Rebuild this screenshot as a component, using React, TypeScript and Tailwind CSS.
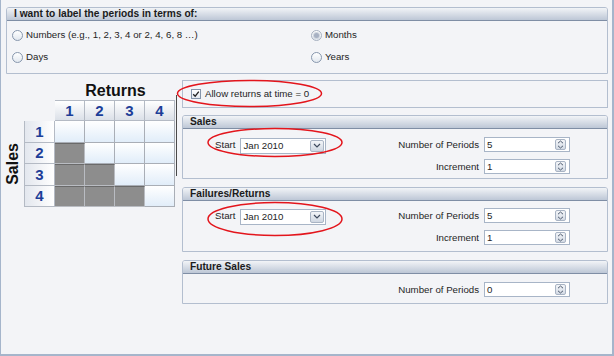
import React from "react";

const sans = "font-['Liberation_Sans',Arial,sans-serif]";

interface RadioProps {
  label: string;
  checked?: boolean;
}

const Radio = ({ label, checked }: RadioProps) => {
  return (
    <div className="flex items-center h-[22px]">
      <span
        className={`flex items-center justify-center w-[11px] h-[11px] rounded-full border bg-linear-to-b from-white to-[#e2e8ef] ${
          checked ? "border-[#a6b0c0]" : "border-[#8797ad]"
        }`}
      >
        {checked && (
          <span className="w-[5px] h-[5px] rounded-full bg-[#a7b1c3] ring-1 ring-[#cfd5de]" />
        )}
      </span>
      <span className="ml-[3px]">{label}</span>
    </div>
  );
};

const PanelHeader = ({ title }: { title: string }) => {
  return (
    <div className="h-[13px] flex items-center pl-[7px] bg-linear-to-b from-[#f2f4f7] to-[#bdc7d6] border-b border-[#7f8ea5] rounded-t-[2px] font-bold text-[10.2px] leading-none text-[#1b1b1b]">
      {title}
    </div>
  );
};

const SpinButton = () => (
  <span className="flex items-center justify-center w-[11px] h-[11px] rounded-[2px] border border-[#a9b4c4] bg-linear-to-b from-[#f3f5f8] to-[#d3dae4]">
    <svg width="7" height="9" viewBox="0 0 7 9">
      <path d="M1 3.2 L3.5 1 L6 3.2" fill="none" stroke="#4d5a6e" strokeWidth="1" />
      <path d="M1 5.8 L3.5 8 L6 5.8" fill="none" stroke="#4d5a6e" strokeWidth="1" />
    </svg>
  </span>
);

const SpinInput = ({ value }: { value: string }) => {
  return (
    <div className="flex items-center w-[86px] h-[15px] bg-white border border-[#a8b5c7] pl-[2px] pr-[3px]">
      <span className="flex-1 leading-none">{value}</span>
      <SpinButton />
    </div>
  );
};

const Combo = ({ value }: { value: string }) => {
  return (
    <div className="flex items-center w-[86px] h-[16px] bg-white border border-[#a8b5c7] pl-[2px] pr-[1px]">
      <span className="flex-1 leading-none">{value}</span>
      <span className="flex items-center justify-center w-[14px] h-[12px] rounded-[2px] border border-[#a9b4c4] bg-linear-to-b from-[#f3f5f8] to-[#cfd7e2]">
        <svg width="8" height="5" viewBox="0 0 8 5">
          <path d="M1 1 L4 4 L7 1" fill="none" stroke="#3f4b5e" strokeWidth="1.2" />
        </svg>
      </span>
    </div>
  );
};

interface RangePanelProps {
  title: string;
  showStart?: boolean;
  rows: { label: string; value: string }[];
  padTop: string;
  padBottom: string;
}

const RangePanel = ({ title, showStart, rows, padTop, padBottom }: RangePanelProps) => {
  return (
    <div className="border border-[#b3becf] rounded-t-[3px]">
      <PanelHeader title={title} />
      <div className={`flex items-start ${padTop} ${padBottom}`}>
        {showStart && (
          <div className="flex items-center h-[15px] mt-[1px] pl-[32px]">
            <span>Start</span>
            <span className="ml-[5px]">
              <Combo value="Jan 2010" />
            </span>
          </div>
        )}
        <div className="ml-auto pr-[37px] grid grid-cols-[auto_86px] gap-x-[5px] gap-y-[7px] items-center">
          {rows.map((row) => (
            <React.Fragment key={row.label}>
              <span className="text-right leading-none">{row.label}</span>
              <SpinInput value={row.value} />
            </React.Fragment>
          ))}
        </div>
      </div>
    </div>
  );
};

const HeaderCell = ({ n, side }: { n: number; side?: boolean }) => (
  <div
    className={`flex items-center justify-center border-r border-b border-[#b4bac4] text-[15px] font-bold text-[#1d3e98] leading-none ${
      side
        ? "border-l bg-linear-to-r from-[#e3e7ee] to-white"
        : "border-t bg-linear-to-b from-white to-[#dbe0e8]"
    }`}
  >
    {n}
  </div>
);

const ReturnsGrid = () => {
  const idx = [1, 2, 3, 4];
  return (
    <div className="grid grid-cols-[31px_repeat(4,30px)] grid-rows-[21px_repeat(4,21.5px)]">
      <div />
      {idx.map((c) => (
        <HeaderCell key={`h${c}`} n={c} />
      ))}
      {idx.map((r) => (
        <React.Fragment key={`r${r}`}>
          <HeaderCell n={r} side />
          {idx.map((c) =>
            c < r ? (
              <div
                key={`c${r}${c}`}
                className="bg-[#8d8d8d] border-t border-t-[#6a6a6a] border-r border-b border-[#b9bcc2]"
              />
            ) : (
              <div
                key={`c${r}${c}`}
                className="bg-linear-to-b from-white to-[#e1edf9] border-r border-b border-[#a9aeb6]"
              />
            )
          )}
        </React.Fragment>
      ))}
    </div>
  );
};

const App = () => {
  return (
    <div
      className={`relative w-[614px] h-[356px] overflow-hidden bg-[#f3f4f7] border-l border-r-2 border-b-2 border-[#a5b5cb] text-[9.7px] text-[#1e1e1e] ${sans}`}
    >
      {/* Period labels */}
      <div className="pt-[7px] pl-[5px] pr-[4px]">
        <div className="border border-[#b3becf] rounded-t-[3px]">
          <PanelHeader title="I want to label the periods in terms of:" />
          <div className="grid grid-cols-[299px_1fr] pl-[5px] pt-[3px] pb-[5px]">
            <Radio label="Numbers (e.g., 1, 2, 3, 4 or 2, 4, 6, 8 …)" />
            <Radio label="Months" checked />
            <Radio label="Days" />
            <Radio label="Years" />
          </div>
        </div>
      </div>

      <div className="flex mt-[6px]">
        {/* Returns / Sales matrix */}
        <div className="w-[175px] pt-[3px]">
          <div className="ml-[54px] w-[121px] text-center font-bold text-[16px] leading-[16px] text-[#111]">
            Returns
          </div>
          <div className="flex mt-[1px]">
            <div className="w-[23px] mt-[21px] h-[86px] flex items-center justify-center">
              <span className="[writing-mode:vertical-rl] rotate-180 font-bold text-[16px] leading-none text-[#111]">
                Sales
              </span>
            </div>
            <ReturnsGrid />
          </div>
        </div>
        <div className="self-start w-px h-[81px] mt-[15px] bg-[#4a4a4a]" />

        {/* Settings */}
        <div className="ml-[5px] w-[426px] flex flex-col">
          <div className="h-[28px] flex items-center pl-[8px] border border-[#b3becf]">
            <span className="flex items-center justify-center w-[10px] h-[10px] border border-[#8595ab] bg-linear-to-b from-white to-[#e3e8ef]">
              <svg width="8" height="8" viewBox="0 0 8 8">
                <path d="M1.2 4.2 L3.2 6.2 L6.8 1.6" fill="none" stroke="#222" strokeWidth="1.3" />
              </svg>
            </span>
            <span className="ml-[4px]">Allow returns at time = 0</span>
          </div>

          <div className="mt-[7px]">
            <RangePanel
              title="Sales"
              showStart
              padTop="pt-[8px]"
              padBottom="pb-[4px]"
              rows={[
                { label: "Number of Periods", value: "5" },
                { label: "Increment", value: "1" },
              ]}
            />
          </div>

          <div className="mt-[8px]">
            <RangePanel
              title="Failures/Returns"
              showStart
              padTop="pt-[7px]"
              padBottom="pb-[6px]"
              rows={[
                { label: "Number of Periods", value: "5" },
                { label: "Increment", value: "1" },
              ]}
            />
          </div>

          <div className="mt-[8px]">
            <RangePanel
              title="Future Sales"
              padTop="pt-[8px]"
              padBottom="pb-[6px]"
              rows={[{ label: "Number of Periods", value: "0" }]}
            />
          </div>
        </div>
      </div>

      {/* Red annotation ellipses */}
      <svg
        className="absolute -left-px top-0 pointer-events-none"
        width="614"
        height="356"
      >
        <ellipse cx="249.5" cy="93.5" rx="72" ry="13" fill="none" stroke="#e3151c" strokeWidth="1.5" />
        <ellipse cx="275" cy="142.5" rx="67" ry="14" fill="none" stroke="#e3151c" strokeWidth="1.5" />
        <ellipse cx="275" cy="219" rx="67" ry="16.5" fill="none" stroke="#e3151c" strokeWidth="1.5" />
      </svg>
    </div>
  );
};

export default App;
